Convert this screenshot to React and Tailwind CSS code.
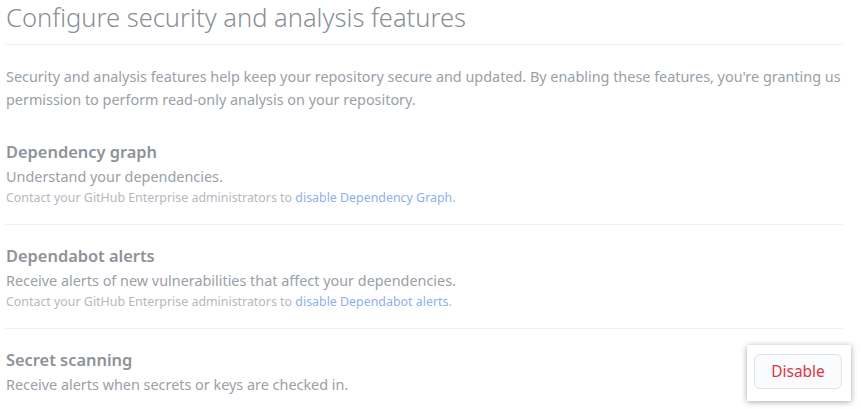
import React from "react";

const features = [
  {
    title: "Dependency graph",
    text: "Understand your dependencies.",
    link: "disable Dependency Graph",
  },
  {
    title: "Dependabot alerts",
    text: "Receive alerts of new vulnerabilities that affect your dependencies.",
    link: "disable Dependabot alerts",
  },
];

export default function App() {
  return (
    <div
      className="w-[861px] h-[409px] bg-white overflow-hidden"
      style={{ fontFamily: '"Noto Sans", "Open Sans", sans-serif' }}
    >
      <div className="w-[838px] ml-[5px]">
        {/* Encabezado */}
        <div className="h-[45px] border-b border-[#eeeff1] pl-[1px]">
          <h1 className="text-[25.5px] leading-[34px] font-light text-[#8a8f96]">
            Configure security and analysis features
          </h1>
        </div>

        <p className="text-[14.4px] leading-[23px] text-[#9aa0a7] pl-[1px] mt-[20px] mb-[10px] whitespace-nowrap">
          Security and analysis features help keep your repository secure and updated. By enabling
          these features, you're granting us
          <br />
          permission to perform read-only analysis on your repository.
        </p>

        {/* Funciones */}
        {features.map((f) => (
          <div key={f.title} className="border-b border-[#eeeff1] pl-[1px] pt-[19px] pb-[17px]">
            <h3 className="text-[16.4px] leading-[24px] font-semibold text-[#8e9298]">{f.title}</h3>
            <p className="text-[14.4px] leading-[24px] mt-[1px] text-[#9aa0a7]">{f.text}</p>
            <p className="text-[12.4px] leading-[18px] text-[#b4b8be]">
              Contact your GitHub Enterprise administrators to{" "}
              <span className="text-[#8fb0ea]">{f.link}</span>.
            </p>
          </div>
        ))}

        <div className="flex items-start justify-between pl-[1px] pt-[19px]">
          <div>
            <h3 className="text-[16.4px] leading-[24px] font-semibold text-[#8e9298]">
              Secret scanning
            </h3>
            <p className="text-[14.4px] leading-[24px] mt-[1px] text-[#9aa0a7]">
              Receive alerts when secrets or keys are checked in.
            </p>
          </div>
          <div className="bg-white pl-[7px] pr-[9px] pt-[9px] pb-[12px] mt-[-3px] mr-[-8px] shadow-[0_1px_6px_rgba(0,0,0,0.35)]">
            <button className="w-[88px] h-[35px] rounded-[6px] border border-[#dfe2e6] bg-[#fafbfc] text-[15.5px] text-[#dc3545]">
              Disable
            </button>
          </div>
        </div>
      </div>
    </div>
  );
}
